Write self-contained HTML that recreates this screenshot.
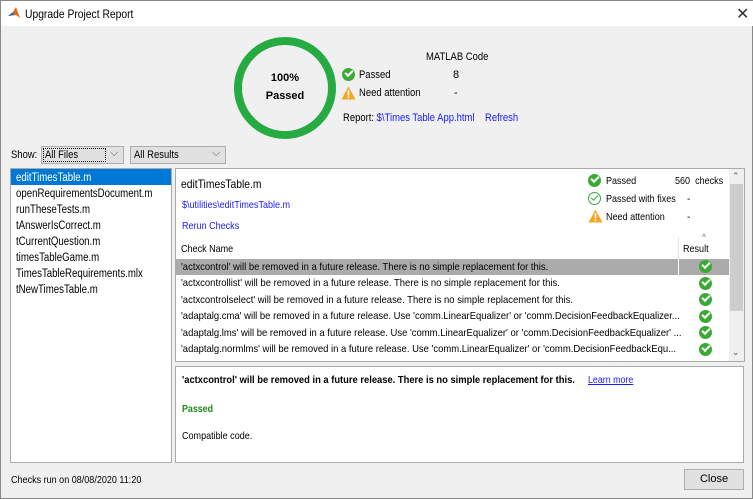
<!DOCTYPE html>
<html><head><style>
*{margin:0;padding:0;box-sizing:border-box}
body{width:753px;height:499px;background:#f0f0f0;font-family:"Liberation Sans",sans-serif;font-size:11px;color:#000;position:relative;overflow:hidden;border:1px solid #888}
.a{position:absolute;white-space:nowrap}
.s{transform:scaleX(.86);transform-origin:left center}
.lnk{color:#1a1aff}
.ok{display:inline-block;width:13px;height:13px;border-radius:50%;background:#3aaa35;position:absolute}
.ok:after{content:"";position:absolute;left:3px;top:2px;width:6px;height:3px;border-left:2px solid #fff;border-bottom:2px solid #fff;transform:rotate(-45deg)}
.okw{display:inline-block;width:13px;height:13px;border-radius:50%;border:1.5px solid #3aaa35;position:absolute}
.okw:after{content:"";position:absolute;left:2px;top:1.5px;width:6px;height:3px;border-left:1.5px solid #3aaa35;border-bottom:1.5px solid #3aaa35;transform:rotate(-45deg)}
.row{position:absolute;left:180px;height:17px;line-height:17px;transform:scaleX(.92);transform-origin:left center}
</style></head><body>
<div class="a" style="left:0;top:0;width:753px;height:25px;background:#fff"></div>
<svg class="a" style="left:6px;top:5px" width="14" height="14" viewBox="0 0 14 14"><path d="M1 10 L6 6 L9 1 L13 12 L9 9 Z" fill="#e06a1b"/><path d="M1 10 L6 6 L7 9 Z" fill="#2a6bb0"/></svg>
<div class="a s" style="left:24px;top:6px;font-size:12px">Upgrade Project Report</div>
<div class="a" style="left:735px;top:3px;font-size:16px;color:#333">✕</div>

<div class="a" style="left:233px;top:36px;width:102px;height:102px;border-radius:50%;border:8px solid #26ab43"></div>
<div class="a" style="left:233px;top:68px;width:102px;text-align:center;font-weight:bold;line-height:18px">100%<br>Passed</div>
<div class="a s" style="left:425px;top:50px">MATLAB Code</div>
<span class="ok" style="left:341px;top:67px"></span>
<div class="a s" style="left:358px;top:68px">Passed</div>
<div class="a" style="left:452px;top:68px">8</div>
<svg class="a" style="left:340px;top:85px" width="15" height="14"><path d="M7.5 0.5 L14.5 13.5 L0.5 13.5Z" fill="#f5a623"/><rect x="6.7" y="4" width="1.6" height="5.5" fill="#fff"/><rect x="6.7" y="10.5" width="1.6" height="1.6" fill="#fff"/></svg>
<div class="a s" style="left:358px;top:86px">Need attention</div>
<div class="a" style="left:453px;top:86px">-</div>
<div class="a s" style="left:342px;top:111px">Report: <span class="lnk">$\Times Table App.html</span> &nbsp;&nbsp;&nbsp;<span class="lnk">Refresh</span></div>

<div class="a s" style="left:10px;top:148px">Show:</div>
<div class="a" style="left:40px;top:145px;width:83px;height:18px;background:#e1e1e1;border:1px solid #adadad"></div>
<div class="a" style="left:42px;top:147px;width:63px;height:14px;border:1px dotted #000;padding-left:1px;line-height:12px"><span class="a s" style="left:1px;top:0">All Files</span></div>
<div class="a" style="left:109px;top:146px;color:#555">⌵</div>
<div class="a" style="left:129px;top:145px;width:96px;height:18px;background:#e1e1e1;border:1px solid #adadad"><span class="a s" style="left:3px;top:2px">All Results</span></div>
<div class="a" style="left:211px;top:146px;color:#555">⌵</div>

<div class="a" style="left:9px;top:167px;width:162px;height:295px;background:#fff;border:1px solid #aaa"></div>
<div class="a" style="left:10px;top:168px;width:160px;height:16px;background:#0078d7"></div>
<div class="a" style="left:15px;top:169px;line-height:16px;font-size:11.5px;transform:scaleX(.84);transform-origin:left top">
<span style="color:#fff">editTimesTable.m</span><br>openRequirementsDocument.m<br>runTheseTests.m<br>tAnswerIsCorrect.m<br>tCurrentQuestion.m<br>timesTableGame.m<br>TimesTableRequirements.mlx<br>tNewTimesTable.m</div>

<div class="a" style="left:174px;top:167px;width:570px;height:194px;background:#fff;border:1px solid #aaa"></div>
<div class="a" style="left:728px;top:168px;width:15px;height:192px;background:#f0f0f0"></div>
<div class="a" style="left:729px;top:183px;width:13px;height:127px;background:#cdcdcd"></div>
<div class="a" style="left:731px;top:170px;font-size:9px;color:#555">⌃</div>
<div class="a" style="left:731px;top:346px;font-size:9px;color:#555">⌄</div>
<div class="a s" style="left:180px;top:176px;font-size:12px">editTimesTable.m</div>
<div class="a lnk s" style="left:181px;top:198px;font-size:10.5px">$\utilities\editTimesTable.m</div>
<div class="a lnk s" style="left:181px;top:219px;font-size:10.5px">Rerun Checks</div>
<span class="ok" style="left:587px;top:173px"></span>
<div class="a s" style="left:605px;top:174px;font-size:10.5px">Passed</div>
<div class="a s" style="left:674px;top:174px;font-size:10.5px">560&nbsp; checks</div>
<span class="okw" style="left:587px;top:191px"></span>
<div class="a s" style="left:605px;top:192px;font-size:10.5px">Passed with fixes</div>
<div class="a" style="left:686px;top:192px;font-size:10.5px">-</div>
<svg class="a" style="left:587px;top:208px" width="15" height="14"><path d="M7.5 0.5 L14.5 13.5 L0.5 13.5Z" fill="#f5a623"/><rect x="6.7" y="4" width="1.6" height="5.5" fill="#fff"/><rect x="6.7" y="10.5" width="1.6" height="1.6" fill="#fff"/></svg>
<div class="a s" style="left:605px;top:210px;font-size:10.5px">Need attention</div>
<div class="a" style="left:686px;top:210px;font-size:10.5px">-</div>
<div class="a s" style="left:180px;top:242px;font-size:10.5px">Check Name</div>
<div class="a" style="left:677px;top:236px;width:1px;height:22px;background:#e5e5e5"></div>
<div class="a" style="left:701px;top:232px;font-size:8px;color:#555">^</div>
<div class="a s" style="left:682px;top:242px;font-size:10.5px">Result</div>
<div class="a" style="left:175px;top:258px;width:553px;height:16px;background:#ababab"></div>
<div class="a" style="left:677px;top:258px;width:1px;height:16px;background:#fff"></div>
<div style="font-size:10.3px">
<div class="row" style="top:258px">'actxcontrol' will be removed in a future release. There is no simple replacement for this.</div>
<div class="row" style="top:274px">'actxcontrollist' will be removed in a future release. There is no simple replacement for this.</div>
<div class="row" style="top:291px">'actxcontrolselect' will be removed in a future release. There is no simple replacement for this.</div>
<div class="row" style="top:307px">'adaptalg.cma' will be removed in a future release. Use 'comm.LinearEqualizer' or 'comm.DecisionFeedbackEqualizer...</div>
<div class="row" style="top:324px">'adaptalg.lms' will be removed in a future release. Use 'comm.LinearEqualizer' or 'comm.DecisionFeedbackEqualizer' ...</div>
<div class="row" style="top:340px">'adaptalg.normlms' will be removed in a future release. Use 'comm.LinearEqualizer' or 'comm.DecisionFeedbackEqu...</div>
</div>
<span class="ok" style="left:698px;top:259px"></span>
<span class="ok" style="left:698px;top:276px"></span>
<span class="ok" style="left:698px;top:292px"></span>
<span class="ok" style="left:698px;top:309px"></span>
<span class="ok" style="left:698px;top:325px"></span>
<span class="ok" style="left:698px;top:342px"></span>

<div class="a" style="left:174px;top:365px;width:569px;height:97px;background:#fff;border:1px solid #aaa"></div>
<div class="a" style="left:181px;top:374px;font-weight:bold;font-size:10.3px;transform:scaleX(.91);transform-origin:left center">'actxcontrol' will be removed in a future release. There is no simple replacement for this.</div>
<div class="a s" style="left:587px;top:374px;font-size:10.3px;color:#1a1aff;text-decoration:underline">Learn more</div>
<div class="a s" style="left:181px;top:403px;font-weight:bold;font-size:10.3px;color:#1b8a1b">Passed</div>
<div class="a s" style="left:181px;top:429px;font-size:10.5px">Compatible code.</div>

<div class="a s" style="left:10px;top:473px;font-size:10.5px">Checks run on 08/08/2020 11:20</div>
<div class="a" style="left:683px;top:468px;width:60px;height:21px;background:#e1e1e1;border:1px solid #adadad;text-align:center;line-height:19px">Close</div>
</body></html>
